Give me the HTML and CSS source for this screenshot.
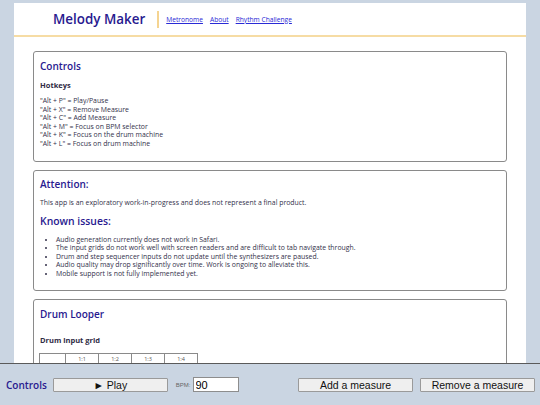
FILE: index.html
```html
<!DOCTYPE html>
<html lang="en">
<head>
<meta charset="utf-8">
<title>Melody Maker</title>
<link rel="stylesheet" href="styles.css">
</head>
<body>
<div class="page">
  <header class="site-header">
    <h1 class="brand">Melody Maker</h1>
    <nav class="nav">
      <a href="#">Metronome</a>
      <a href="#">About</a>
      <a href="#">Rhythm Challenge</a>
    </nav>
  </header>
  <main class="content">
    <section class="card">
      <h2 class="card-title">Controls</h2>
      <h3 class="sub-title">Hotkeys</h3>
      <ul class="plain-list">
        <li>"Alt + P" = Play/Pause</li>
        <li>"Alt + X" = Remove Measure</li>
        <li>"Alt + C" = Add Measure</li>
        <li>"Alt + M" = Focus on BPM selector</li>
        <li>"Alt + K" = Focus on the drum machine</li>
        <li>"Alt + L" = Focus on drum machine</li>
      </ul>
    </section>
    <section class="card card-notes">
      <h2 class="card-title">Attention:</h2>
      <p class="small-text">This app is an exploratory work-in-progress and does not represent a final product.</p>
      <h2 class="card-title known">Known issues:</h2>
      <ul class="bullet-list">
        <li>Audio generation currently does not work in Safari.</li>
        <li>The input grids do not work well with screen readers and are difficult to tab navigate through.</li>
        <li>Drum and step sequencer inputs do not update until the synthesizers are paused.</li>
        <li>Audio quality may drop significantly over time. Work is ongoing to alleviate this.</li>
        <li>Mobile support is not fully implemented yet.</li>
      </ul>
    </section>
    <section class="card">
      <h2 class="card-title">Drum Looper</h2>
      <h3 class="sub-title grid-title">Drum input grid</h3>
      <table class="grid">
        <tr><th></th><th>1:1</th><th>1:2</th><th>1:3</th><th>1:4</th></tr>
        <tr><th></th><td></td><td></td><td></td><td></td></tr>
        <tr><th></th><td></td><td></td><td></td><td></td></tr>
        <tr><th></th><td></td><td></td><td></td><td></td></tr>
      </table>
    </section>
  </main>
</div>
<footer class="control-bar">
  <span class="bar-title">Controls</span>
  <button class="btn btn-play">&#9658; Play</button>
  <label class="bpm-label">BPM:</label>
  <input class="bpm-input" type="text" value="90">
  <span class="spacer"></span>
  <button class="btn">Add a measure</button>
  <button class="btn">Remove a measure</button>
</footer>
</body>
</html>
```

FILE: styles.css
```css
* { box-sizing: border-box; }
html, body { margin: 0; padding: 0; }
body {
  background: #cad5e2;
  font-family: "Open Sans", "DejaVu Sans", sans-serif;
  color: #33304a;
}
.page {
  margin: 3px 14px 0;
  background: #ffffff;
  padding-bottom: 60px;
}
.site-header {
  display: flex;
  align-items: center;
  height: 34px;
  padding-left: 39px;
  border-bottom: 2px solid #f6dca4;
}
.brand {
  margin: 0;
  font-size: 13.4px;
  font-weight: 600;
  color: #28198f;
  padding-right: 12px;
  border-right: 2px solid #f5d491;
  line-height: 17px;
}
.nav {
  display: flex;
  gap: 7px;
  padding-left: 7px;
}
.nav a {
  font-size: 6.65px;
  color: #2a2ad6;
  text-decoration: underline;
}
.content {
  padding: 14px 19px 0;
  display: flex;
  flex-direction: column;
  gap: 8px;
}
.card {
  border: 1px solid #8a8a8a;
  border-radius: 3px;
  padding: 7px 6px 13px;
}
.card-notes { padding-top: 6px; padding-bottom: 12px; }
.card-title {
  margin: 0;
  font-size: 10px;
  line-height: 14px;
  font-weight: 600;
  color: #28198f;
}
.card-title.known { margin-top: 7px; font-size: 10.4px; }
.sub-title {
  margin: 7px 0 0;
  font-size: 7.5px;
  line-height: 10px;
  font-weight: 700;
  color: #2f2b45;
}
.plain-list {
  list-style: none;
  margin: 7px 0 0;
  padding: 0;
  font-size: 6.9px;
  line-height: 8.5px;
}
.small-text {
  margin: 7.5px 0 0;
  font-size: 6.9px;
  line-height: 8.5px;
}
.bullet-list {
  margin: 7.5px 0 0;
  padding-left: 16px;
  font-size: 6.9px;
  line-height: 8.5px;
}
.grid-title { margin-top: 14px; }
.grid {
  margin-top: 8px;
  margin-left: -1px;
  border-collapse: collapse;
  font-size: 5.5px;
  color: #555;
}
.grid th, .grid td {
  border: 1px solid #8a8a8a;
  height: 10px;
  padding: 0;
  font-weight: 400;
  text-align: center;
}
.grid th:first-child { width: 26px; }
.grid tr > :not(:first-child) { width: 33px; }
.control-bar {
  position: fixed;
  left: 0;
  right: 0;
  bottom: 0;
  height: 42px;
  background: #cad5e2;
  border-top: 1px solid #5a5a5a;
  display: flex;
  align-items: center;
  padding: 0 5px 0 6px;
  font-family: "Liberation Sans", Arial, sans-serif;
}
.bar-title {
  font-family: "Open Sans", sans-serif;
  font-size: 10px;
  font-weight: 600;
  color: #28198f;
  margin-right: 6px;
}
.btn {
  width: 115px;
  height: 14px;
  padding: 0;
  font-family: "Liberation Sans", Arial, sans-serif;
  font-size: 10.5px;
  line-height: 12px;
  color: #111;
  background: #efefef;
  border: 1px solid #9a9a9a;
  border-radius: 1px;
}
.btn + .btn { margin-left: 7px; }
.bpm-label {
  font-size: 6px;
  color: #666;
  margin: 0 2px 0 8px;
}
.bpm-input {
  width: 46px;
  height: 15px;
  font-family: "Liberation Sans", Arial, sans-serif;
  font-size: 11px;
  padding: 0 2px;
  border: 1px solid #8d8d8d;
  background: #fff;
}
.spacer { flex: 1; }
```
